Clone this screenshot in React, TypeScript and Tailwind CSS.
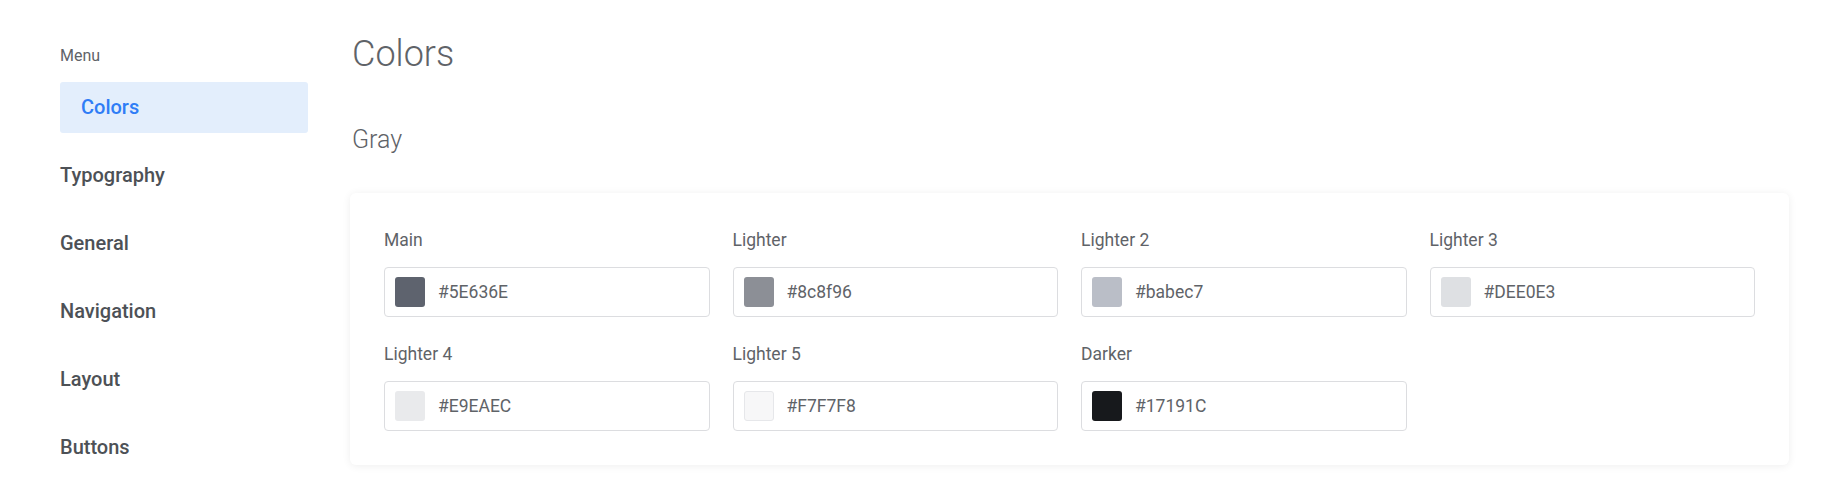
import React from 'react';

const navItems = ['Typography', 'General', 'Navigation', 'Layout', 'Buttons'];

const grays = [
  { label: 'Main', value: '#5E636E', swatch: 'bg-[#5E636E]' },
  { label: 'Lighter', value: '#8c8f96', swatch: 'bg-[#8c8f96]' },
  { label: 'Lighter 2', value: '#babec7', swatch: 'bg-[#babec7]' },
  { label: 'Lighter 3', value: '#DEE0E3', swatch: 'bg-[#DEE0E3]' },
  { label: 'Lighter 4', value: '#E9EAEC', swatch: 'bg-[#E9EAEC]' },
  { label: 'Lighter 5', value: '#F7F7F8', swatch: 'bg-[#F7F7F8] border border-[#e6e7ea]' },
  { label: 'Darker', value: '#17191C', swatch: 'bg-[#17191C]' },
];

function ColorField({ label, value, swatch }: { label: string; value: string; swatch: string }) {
  return (
    <div className="flex flex-col">
      <span className="mb-[17px] text-[17.5px] leading-5 text-[#5f6368]">{label}</span>
      <div className="flex h-[50px] items-center rounded-[4px] border border-[#dcdde0] bg-white pl-[10px]">
        <span className={`h-[30px] w-[30px] rounded-[3px] ${swatch}`} />
        <span className="ml-[13px] text-[17.5px] text-[#5f6368]">{value}</span>
      </div>
    </div>
  );
}

export default function App() {
  return (
    <div className="flex min-h-[502px] bg-white font-['Roboto',sans-serif]">
      <aside className="ml-[60px] w-[248px] shrink-0 pt-[46px]">
        <p className="text-[16px] leading-5 text-[#5f6368]">Menu</p>
        <nav className="mt-[16px] flex flex-col gap-[17px]">
          <a className="flex h-[51px] items-center rounded-[3px] bg-[#e3eefc] pb-[1px] pl-[21px] text-[20px] font-medium text-[#2f7df6]">
            Colors
          </a>
          {navItems.map((item) => (
            <a key={item} className="flex h-[51px] items-center pb-[1px] text-[20px] font-medium text-[#4d5156]">
              {item}
            </a>
          ))}
        </nav>
      </aside>

      <main className="ml-[42px] mr-[51px] flex-1 pt-[32px]">
        <h1 className="pl-[2px] text-[36px] font-light leading-[44px] text-[#5f6368]">Colors</h1>
        <h2 className="mt-[49px] pl-[2px] text-[25px] font-light leading-[30px] text-[#5f6368]">Gray</h2>
        <section className="mt-[38px] rounded-[6px] bg-white px-[34px] pb-[34px] pt-[37px] shadow-[0_1px_8px_rgba(0,0,0,0.07)]">
          <div className="grid grid-cols-4 gap-x-[23px] gap-y-[27px]">
            {grays.map((g) => (
              <ColorField key={g.label} {...g} />
            ))}
          </div>
        </section>
      </main>
    </div>
  );
}
